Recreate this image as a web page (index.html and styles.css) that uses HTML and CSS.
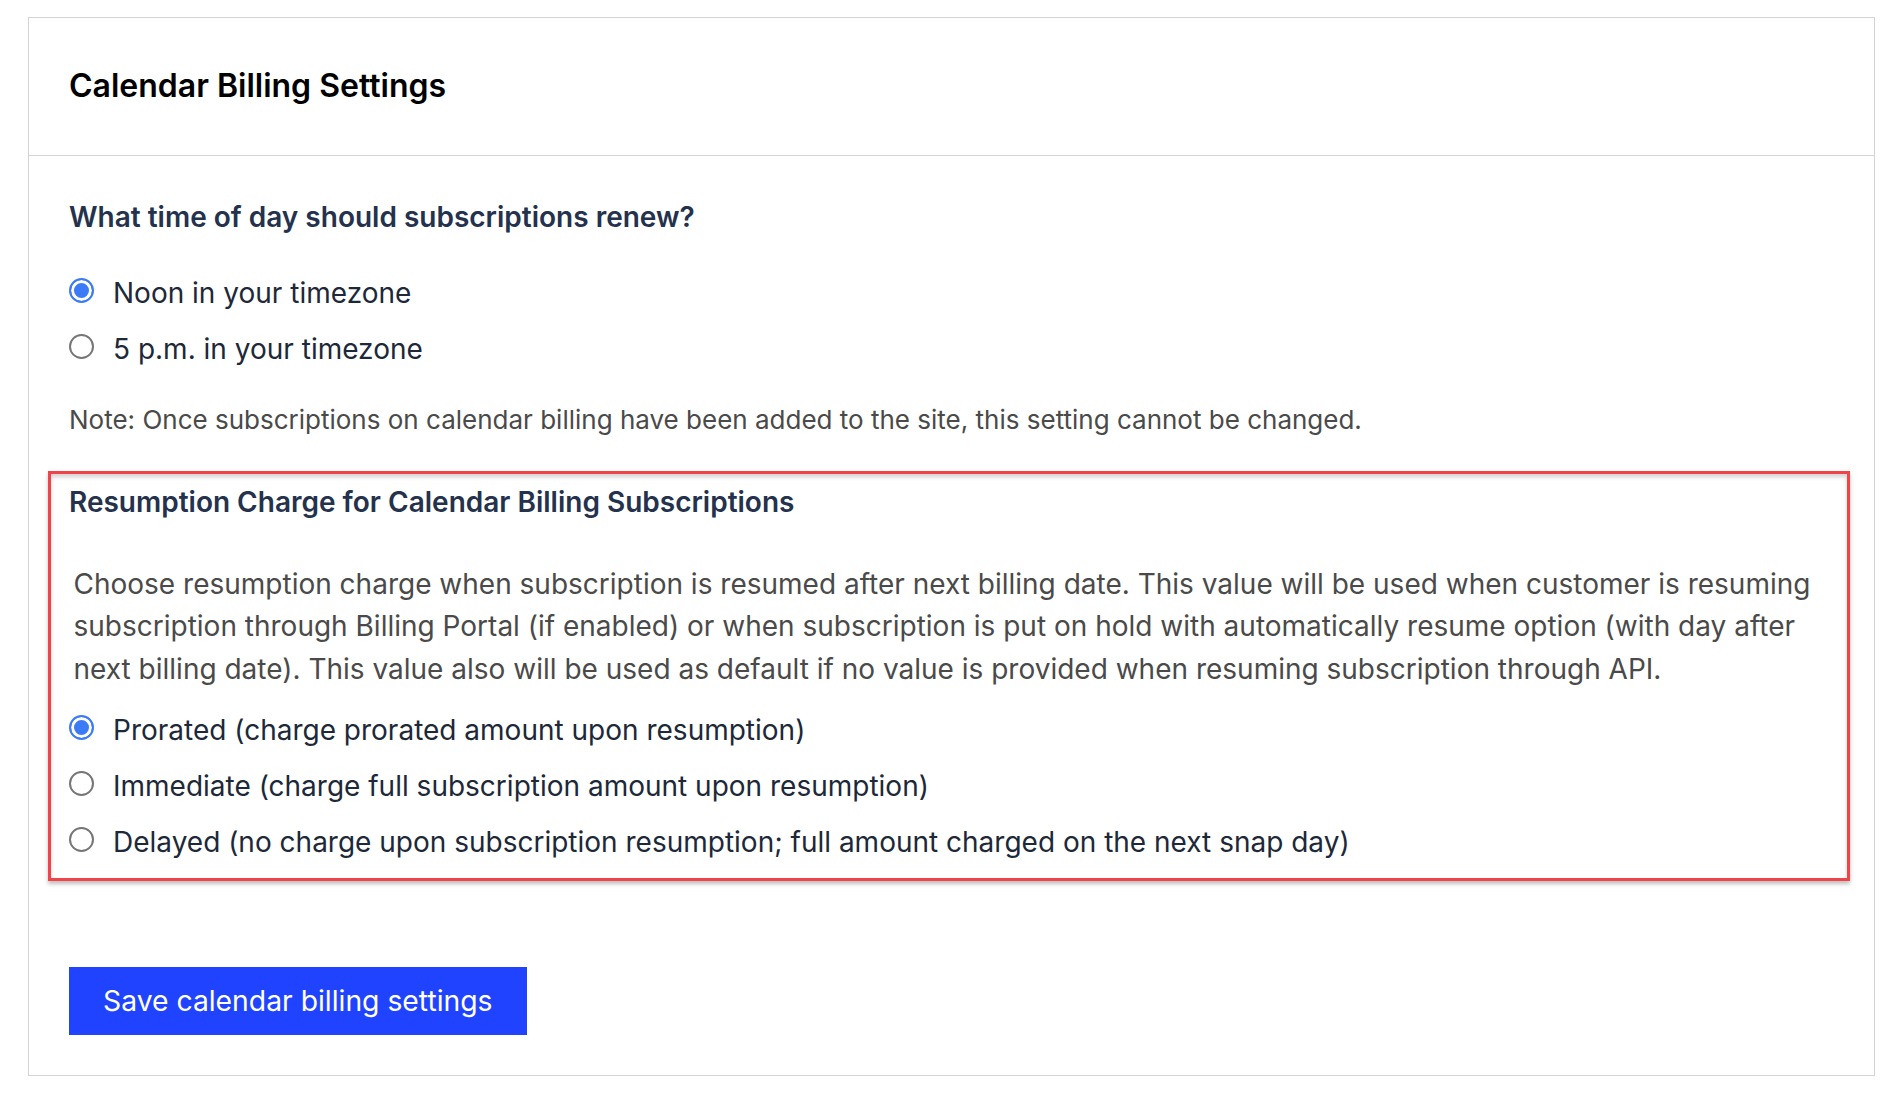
FILE: index.html
```html
<!DOCTYPE html>
<html lang="en">
<head>
<meta charset="utf-8">
<title>Calendar Billing Settings</title>
<link rel="stylesheet" href="styles.css">
</head>
<body>
<div class="card">
  <div class="card-header">
    <h1 class="title">Calendar Billing Settings</h1>
  </div>
  <div class="card-body">
    <h2 class="question">What time of day should subscriptions renew?</h2>
    <div class="radio-group">
      <label class="radio-row"><input type="radio" name="renew" checked><span class="radio-label">Noon in your timezone</span></label>
      <label class="radio-row"><input type="radio" name="renew"><span class="radio-label">5 p.m. in your timezone</span></label>
    </div>
    <p class="note">Note: Once subscriptions on calendar billing have been added to the site, this setting cannot be changed.</p>

    <div class="highlight">
      <h2 class="section-title">Resumption Charge for Calendar Billing Subscriptions</h2>
      <p class="description">Choose resumption charge when subscription is resumed after next billing date. This value will be used when customer is resuming subscription through Billing Portal (if enabled) or when subscription is put on hold with automatically resume option (with day after next billing date). This value also will be used as default if no value is provided when resuming subscription through API.</p>
      <div class="radio-group radio-group-tight">
        <label class="radio-row"><input type="radio" name="resume" checked><span class="radio-label">Prorated (charge prorated amount upon resumption)</span></label>
        <label class="radio-row"><input type="radio" name="resume"><span class="radio-label">Immediate (charge full subscription amount upon resumption)</span></label>
        <label class="radio-row"><input type="radio" name="resume"><span class="radio-label">Delayed (no charge upon subscription resumption; full amount charged on the next snap day)</span></label>
      </div>
    </div>

    <button class="save-btn" type="button">Save calendar billing settings</button>
  </div>
</div>
</body>
</html>
```

FILE: styles.css
```css
* {
  box-sizing: border-box;
}

html, body {
  margin: 0;
  padding: 0;
  background: #ffffff;
}

body {
  font-family: Inter, "Noto Sans", "Liberation Sans", sans-serif;
  color: #1d2839;
}

.card {
  margin: 17px 0 0 28px;
  width: 1847px;
  border: 1px solid #d4d4d4;
  background: #ffffff;
}

.card-header {
  height: 138px;
  border-bottom: 1px solid #d4d4d4;
  display: flex;
  align-items: center;
  padding-left: 40px;
}

.title {
  margin: -2px 0 0 0;
  font-size: 32px;
  line-height: 40px;
  font-weight: 600;
  color: #000000;
}

.card-body {
  padding: 44px 24px 40px 40px;
}

.question {
  margin: 0;
  font-size: 28px;
  line-height: 34px;
  font-weight: 600;
  color: #24324d;
}

.radio-group {
  margin-top: 31px;
  display: flex;
  flex-direction: column;
}

.radio-row {
  display: flex;
  align-items: center;
  height: 56px;
  cursor: pointer;
}

.radio-row input {
  appearance: none;
  -webkit-appearance: none;
  margin: -6px 19px 0 0;
  width: 25px;
  height: 25px;
  flex: 0 0 25px;
  border: 2px solid #767676;
  border-radius: 50%;
  background: #ffffff;
}

.radio-row input:checked {
  border: 2.5px solid #3b7bf6;
  background: #3b7bf6;
  box-shadow: inset 0 0 0 3px #ffffff;
}

.radio-label {
  font-size: 28px;
  line-height: 56px;
  color: #1d2839;
}

.note {
  margin: 27px 0 0 0;
  font-size: 26px;
  line-height: 32px;
  color: #4a4a4a;
}

.highlight {
  margin: 35px 0 0 -21px;
  border: 3px solid #f0434a;
  padding: 11px 18px 8px 18px;
  box-shadow: 0 3px 4px rgba(0, 0, 0, 0.25), inset 0 3px 4px rgba(0, 0, 0, 0.18);
}

.section-title {
  margin: 0;
  font-size: 28px;
  line-height: 34px;
  font-weight: 600;
  color: #24324d;
}

.description {
  margin: 43.5px 0 0 0;
  padding-left: 4.5px;
  padding-right: 6px;
  font-size: 28px;
  line-height: 42.5px;
  color: #4a4a4a;
}

.radio-group-tight {
  margin-top: 12px;
}

.save-btn {
  margin-top: 86px;
  height: 68px;
  padding: 0 34px;
  border: none;
  border-radius: 0;
  background: #1f43ff;
  color: #ffffff;
  font-family: Inter, "Noto Sans", "Liberation Sans", sans-serif;
  font-size: 28.3px;
  font-weight: 400;
  cursor: pointer;
}
```
